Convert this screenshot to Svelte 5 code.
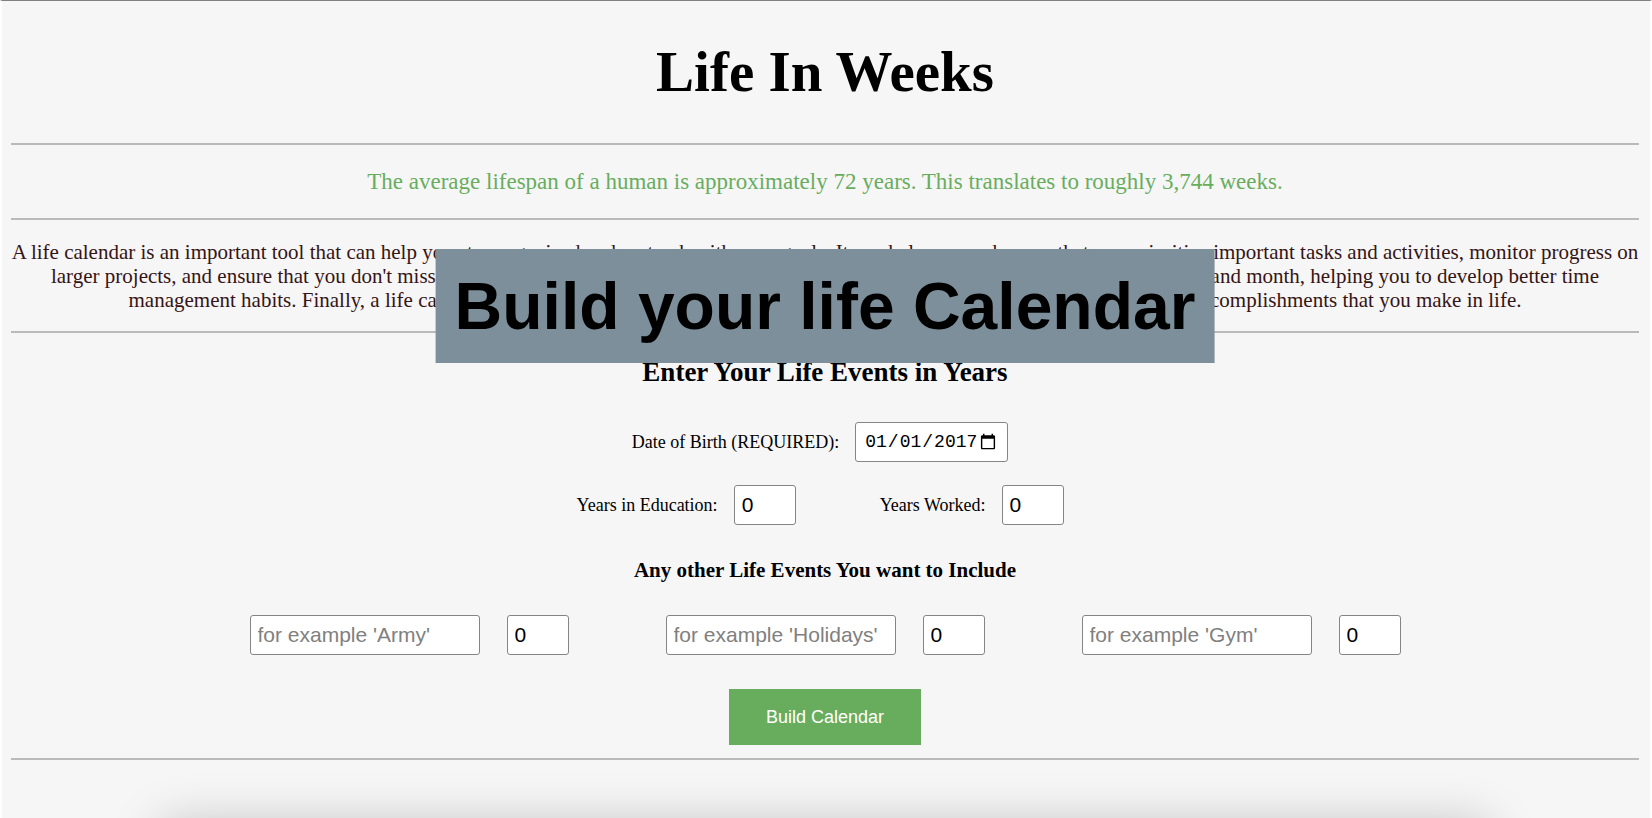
<script>
  let birthDate = $state('2017-01-01');
  let education = $state(0);
  let worked = $state(0);
  let events = $state([
    { id: 'event-1', hint: "for example 'Army'", name: '', years: 0 },
    { id: 'event-2', hint: "for example 'Holidays'", name: '', years: 0 },
    { id: 'event-3', hint: "for example 'Gym'", name: '', years: 0 }
  ]);
</script>

<div class="page">
  <header>
    <h1>Life In Weeks</h1>
  </header>
  <hr />
  <p class="fact">The average lifespan of a human is approximately 72 years. This translates to roughly 3,744 weeks.</p>
  <hr />
  <div class="intro">
    <p>
      A life calendar is an important tool that can help you stay organized and on track with your goals. It can help you make sure that you prioritize important tasks and activities, monitor progress on<br />
      larger projects, and ensure that you don't miss important deadlines. It can also help you to plan and manage your time for each day, week, and month, helping you to develop better time<br />
      management habits. Finally, a life calendar can also help you to look back and reflect on your progress and to celebrate all the accomplishments that you make in life.
    </p>
    <div class="banner">Build your life Calendar</div>
  </div>
  <hr />
  <form onsubmit={(e) => e.preventDefault()}>
    <h2>Enter Your Life Events in Years</h2>
    <div class="row fields">
      <div class="field">
        <label for="birth">Date of Birth (REQUIRED):</label>
        <input id="birth" class="date" type="date" bind:value={birthDate} required />
      </div>
    </div>
    <div class="row fields">
      <div class="field">
        <label for="education">Years in Education:</label>
        <input id="education" class="years" type="number" min="0" bind:value={education} />
      </div>
      <div class="field">
        <label for="worked">Years Worked:</label>
        <input id="worked" class="years" type="number" min="0" bind:value={worked} />
      </div>
    </div>
    <h3>Any other Life Events You want to Include</h3>
    <div class="row events">
      {#each events as event (event.id)}
        <div class="event">
          <input class="name" type="text" placeholder={event.hint} aria-label="Event name" bind:value={event.name} />
          <input class="years" type="number" min="0" aria-label="Years" bind:value={event.years} />
        </div>
      {/each}
    </div>
    <button type="submit">Build Calendar</button>
  </form>
  <hr />
  <div class="shade"></div>
</div>

<style>
  :global(body) {
    background: #f6f6f6;
  }
  .page {
    box-sizing: border-box;
    min-height: 100vh;
    padding: 0 11px 0 9px;
    border-top: 1px solid #808080;
    border-left: 2px solid #fff;
    border-right: 2px solid #fff;
    background: #f6f6f6;
    font-family: "Liberation Serif", "Times New Roman", serif;
    color: #000;
    text-align: center;
    overflow: hidden;
    display: flex;
    flex-direction: column;
  }
  h1, h2, h3, p {
    margin: 0;
  }
  hr {
    width: 100%;
    height: 2px;
    margin: 0;
    border: 0;
    background: #bababa;
  }
  h1 {
    padding: 39px 0;
    font-size: 57px;
    line-height: 64px;
  }
  .fact {
    padding: 22px 0;
    font-size: 23px;
    line-height: 29px;
    color: #68ad5d;
  }
  .intro {
    position: relative;
    display: flex;
    justify-content: center;
    padding: 20px 0 19px;
    font-size: 21px;
    line-height: 24px;
    color: #351414;
  }
  .intro p {
    white-space: nowrap;
  }
  .banner {
    position: absolute;
    top: 29px;
    left: 50%;
    transform: translateX(-50%);
    padding: 19px;
    background: #7d8f9a;
    color: #000;
    font: bold 66px/76px "Liberation Sans", Arial, sans-serif;
    white-space: nowrap;
  }
  form {
    display: flex;
    flex-direction: column;
    align-items: center;
  }
  h2 {
    padding-top: 23px;
    font-size: 27px;
    line-height: 32px;
  }
  .row {
    display: flex;
    justify-content: center;
    gap: 84px;
    margin-top: 23px;
  }
  .fields {
    padding-right: 10px;
  }
  h2 + .row {
    margin-top: 34px;
  }
  .field {
    display: flex;
    align-items: center;
    gap: 16px;
    font-size: 18px;
  }
  .event {
    display: flex;
    gap: 27px;
  }
  .events {
    gap: 97px;
    margin-top: 32px;
  }
  input {
    box-sizing: border-box;
    height: 40px;
    padding: 0 7px;
    border: 1px solid #858585;
    border-radius: 3px;
    background: #fff;
    color: #000;
    font: 21px "Liberation Sans", Arial, sans-serif;
  }
  input::placeholder {
    color: #808080;
  }
  .date {
    width: 153px;
    padding: 0 8px;
    font: 18px "Liberation Mono", monospace;
  }
  .years {
    width: 62px;
    appearance: textfield;
  }
  .name {
    width: 230px;
  }
  h3 {
    margin-top: 32px;
    font-size: 21px;
    line-height: 26px;
  }
  button {
    height: 56px;
    margin: 34px 0 13px;
    padding: 0 37px;
    border: 0;
    background: #68ad5d;
    color: #fff;
    font: 18px "Liberation Sans", Arial, sans-serif;
  }
  .shade {
    flex: 1;
    margin: 0 150px;
    position: relative;
  }
  .shade::after {
    content: "";
    position: absolute;
    top: 100%;
    left: 0;
    right: 0;
    height: 60px;
    box-shadow: 0 6px 50px rgba(0, 0, 0, 0.22);
  }
</style>
